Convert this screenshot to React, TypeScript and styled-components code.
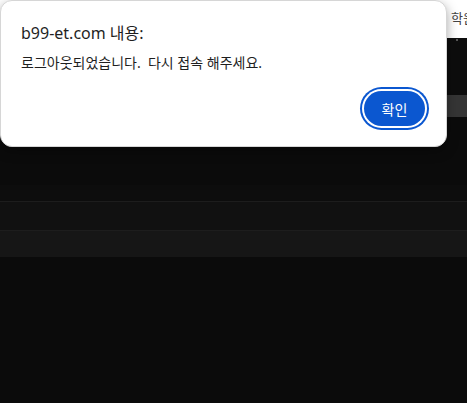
import styled, { createGlobalStyle } from 'styled-components'

const GlobalStyle = createGlobalStyle`
  html, body {
    margin: 0;
    padding: 0;
    background: #0b0b0b;
    overflow: hidden;
  }
  body {
    font-family: "Noto Sans", "Noto Sans CJK KR", sans-serif;
  }
`

export default function App() {
  return (
    <Page>
      <GlobalStyle />
      <TopStrip>
        <TopText>학원서</TopText>
      </TopStrip>
      <NavArea>
        <NavDot />
      </NavArea>
      <MenuBand />
      <Gap height={68} />
      <Row tone="#0d0d0d" height={16} />
      <Row tone="#111111" height={28} line />
      <Row tone="#161616" height={26} line />

      <Dialog>
        <Title>b99-et.com 내용:</Title>
        <Message>로그아웃되었습니다.&nbsp; 다시 접속 해주세요.</Message>
        <Actions>
          <OkButton>확인</OkButton>
        </Actions>
      </Dialog>
    </Page>
  )
}

const Page = styled.div`
  position: relative;
  width: 467px;
  height: 403px;
  background: #0b0b0b;
  overflow: hidden;
`

const TopStrip = styled.div`
  height: 38px;
  background: #ffffff;
  display: flex;
  align-items: center;
  padding-left: 451px;
  overflow: hidden;
`

const TopText = styled.span`
  font-size: 13px;
  color: #444;
  white-space: nowrap;
  margin-top: -4px;
`

const NavArea = styled.div`
  height: 57px;
  background: #0d0d0d;
  position: relative;
`

const NavDot = styled.div`
  position: absolute;
  left: 456px;
  top: 1px;
  width: 2px;
  height: 2px;
  background: #555;
`

const MenuBand = styled.div`
  height: 22px;
  background: #353535;
`

const Gap = styled.div<{ height: number }>`
  height: ${p => p.height}px;
`

const Row = styled.div<{ tone: string; height: number; line?: boolean }>`
  height: ${p => p.height}px;
  background: ${p => p.tone};
  border-top: ${p => (p.line ? '1px solid #1d1d1d' : 'none')};
`

const Dialog = styled.div`
  position: absolute;
  left: 0;
  top: 0;
  width: 447px;
  height: 147px;
  box-sizing: border-box;
  background: #ffffff;
  border: 1px solid #d6d6d6;
  border-radius: 12px;
  box-shadow: 0 4px 12px rgba(0, 0, 0, 0.35);
  padding: 21px 16px 18px 20px;
  display: flex;
  flex-direction: column;
`

const Title = styled.div`
  font-size: 16px;
  line-height: 22px;
  color: #1f1f1f;
`

const Message = styled.div`
  margin-top: 9px;
  font-size: 14px;
  line-height: 19px;
  color: #1f1f1f;
  white-space: pre;
`

const Actions = styled.div`
  margin-top: auto;
  display: flex;
  justify-content: flex-end;
`

const OkButton = styled.button`
  width: 61px;
  height: 35px;
  margin-right: 5px;
  margin-bottom: 2px;
  border: none;
  border-radius: 18px;
  background: #0b57d0;
  color: #ffffff;
  font-family: "Noto Sans", "Noto Sans CJK KR", sans-serif;
  font-size: 14px;
  box-shadow: 0 0 0 2px #ffffff, 0 0 0 4px #0b57d0;
  cursor: pointer;
`
